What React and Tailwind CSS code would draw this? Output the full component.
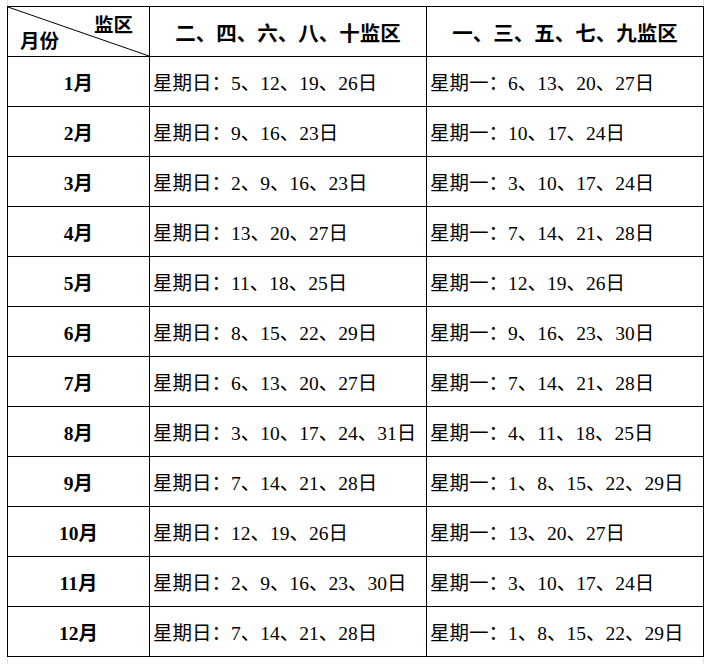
import React from 'react';

const rows = [
    { month: '1月', even: '星期日：5、12、19、26日', odd: '星期一：6、13、20、27日' },
    { month: '2月', even: '星期日：9、16、23日', odd: '星期一：10、17、24日' },
    { month: '3月', even: '星期日：2、9、16、23日', odd: '星期一：3、10、17、24日' },
    { month: '4月', even: '星期日：13、20、27日', odd: '星期一：7、14、21、28日' },
    { month: '5月', even: '星期日：11、18、25日', odd: '星期一：12、19、26日' },
    { month: '6月', even: '星期日：8、15、22、29日', odd: '星期一：9、16、23、30日' },
    { month: '7月', even: '星期日：6、13、20、27日', odd: '星期一：7、14、21、28日' },
    { month: '8月', even: '星期日：3、10、17、24、31日', odd: '星期一：4、11、18、25日' },
    { month: '9月', even: '星期日：7、14、21、28日', odd: '星期一：1、8、15、22、29日' },
    { month: '10月', even: '星期日：12、19、26日', odd: '星期一：13、20、27日' },
    { month: '11月', even: '星期日：2、9、16、23、30日', odd: '星期一：3、10、17、24日' },
    { month: '12月', even: '星期日：7、14、21、28日', odd: '星期一：1、8、15、22、29日' },
];

const font = { fontFamily: '"Liberation Serif", "Noto Sans CJK SC", serif' };

export default function App() {
    return (
        <div className="w-[711px] h-[664px] bg-white overflow-hidden text-black" style={font}>
            <div className="ml-[7px] w-[697px] h-[664px] border-x border-[#e4e4e4] pt-[6px]">
                <table className="-ml-px w-[697px] table-fixed border-collapse">
                    <colgroup>
                        <col className="w-[142px]" />
                        <col className="w-[277px]" />
                        <col className="w-[277px]" />
                    </colgroup>
                    <thead>
                        <tr className="h-[50px]">
                            <th className="relative border border-black p-0 font-bold text-[19.5px]">
                                <svg className="absolute inset-0 w-full h-full" preserveAspectRatio="none" viewBox="0 0 100 100">
                                    <line x1="0" y1="0" x2="100" y2="100" stroke="#000" strokeWidth="1" vectorEffect="non-scaling-stroke" />
                                </svg>
                                <span className="absolute right-[16px] top-[7px] leading-6">监区</span>
                                <span className="absolute left-[12px] top-[23px] leading-6">月份</span>
                            </th>
                            <th className="border border-black px-0 pt-[6px] pb-0 text-center font-bold text-[20.5px]">二、四、六、八、十监区</th>
                            <th className="border border-black px-0 pt-[6px] pb-0 text-center font-bold text-[20.5px]">一、三、五、七、九监区</th>
                        </tr>
                    </thead>
                    <tbody>
                        {rows.map((r) => (
                            <tr key={r.month} className="h-[50px]">
                                <td className="border border-black px-0 pt-[5px] pb-0 text-center font-bold text-[19.5px]">{r.month}</td>
                                <td className="border border-black pt-[5px] pb-0 pl-[3px] pr-0 text-[19.5px] whitespace-nowrap">{r.even}</td>
                                <td className="border border-black pt-[5px] pb-0 pl-[3px] pr-0 text-[19.5px] whitespace-nowrap">{r.odd}</td>
                            </tr>
                        ))}
                    </tbody>
                </table>
            </div>
        </div>
    );
}
